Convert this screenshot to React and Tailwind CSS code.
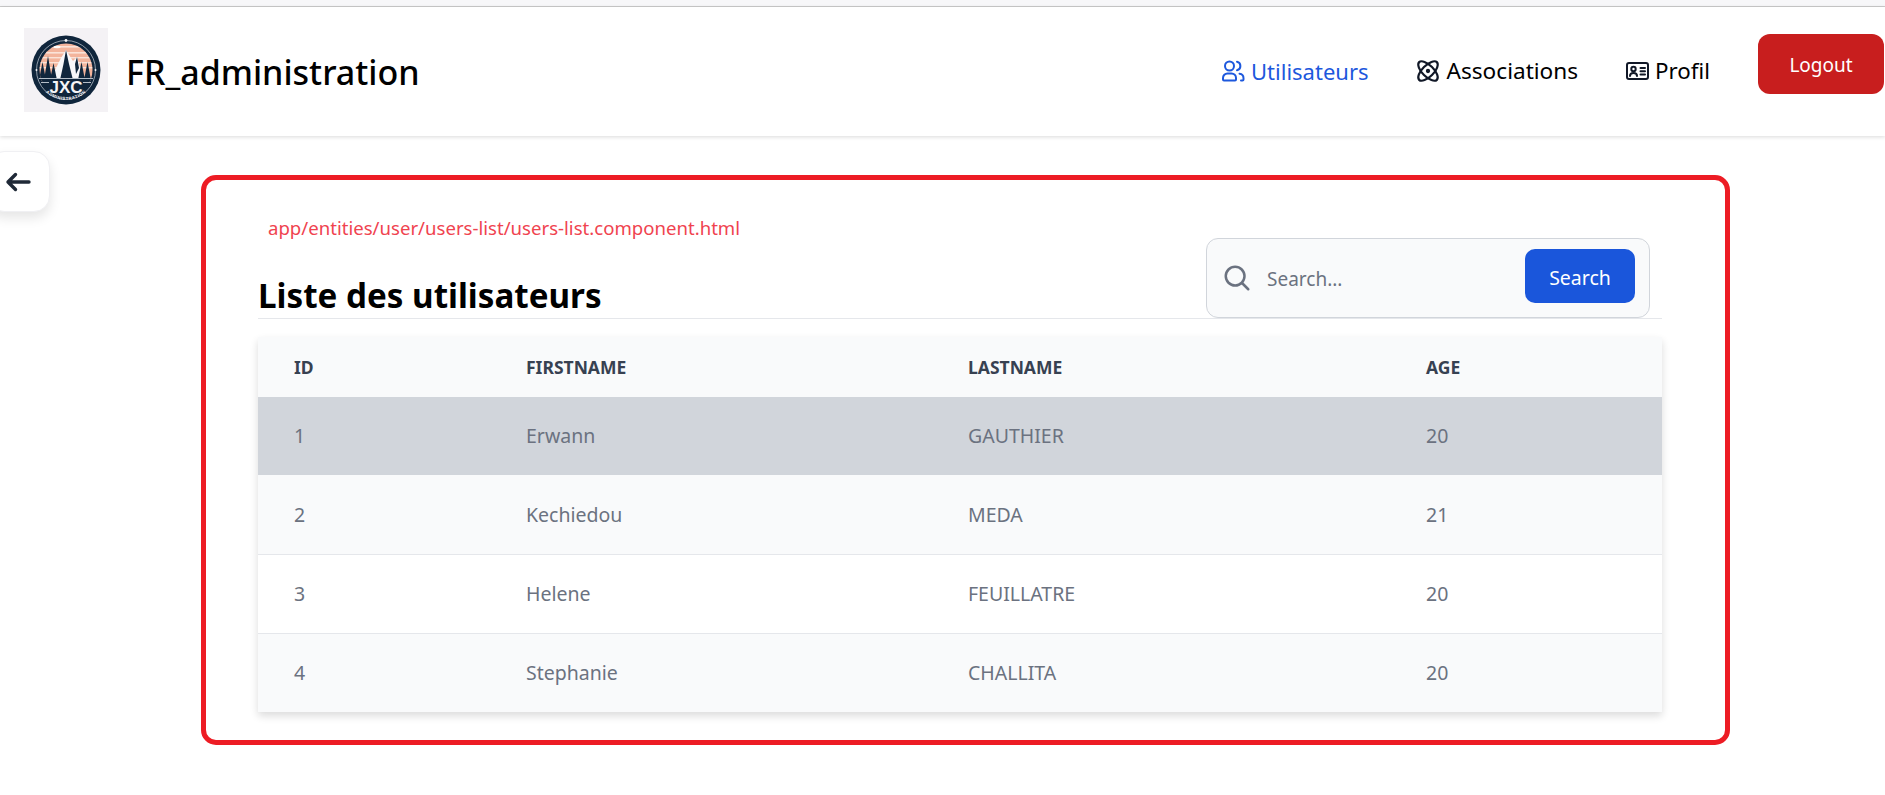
import React from "react";
import { HiOutlineMagnifyingGlass } from "react-icons/hi2";
import { Atom } from "lucide-react";

const FONT = "font-['Noto_Sans','Open_Sans',sans-serif]";

function Logo() {
  return (
    <div className="w-[84px] h-[84px] bg-[#f4f2f5] flex items-center justify-center shrink-0 mt-[-4px]">
      <svg viewBox="0 0 84 84" className="w-[84px] h-[84px]">
        <defs>
          <clipPath id="sky"><circle cx="42" cy="42" r="26.5" /></clipPath>
          <path id="arc" d="M12 42 A30 30 0 0 0 72 42" />
        </defs>
        <circle cx="42" cy="42" r="34.5" fill="#10263c" />
        <circle cx="42" cy="42" r="29.5" fill="none" stroke="#c8d0d8" strokeWidth="0.7" />
        <g clipPath="url(#sky)">
          <rect x="10" y="15" width="64" height="40" fill="#f3b49c" />
          <rect x="10" y="18" width="64" height="1.6" fill="#fbe3d8" />
          <rect x="10" y="24" width="64" height="1.6" fill="#fbe3d8" />
          <rect x="10" y="29" width="64" height="1.4" fill="#fbe3d8" />
          <rect x="10" y="34" width="64" height="1.4" fill="#fbe3d8" />
          <rect x="10" y="39" width="64" height="1.4" fill="#fbe3d8" />
          <ellipse cx="33" cy="19" rx="3.5" ry="1.2" fill="#ffffff" />
          <path d="M26 52 L37 30 L42 22 L47 30 L49 33 L53 29 L60 52 Z" fill="#f7f7f9" />
          <path d="M36 52 L39.5 36 L42 22 L45 36 L49 52 Z" fill="#10263c" />
          <path d="M53 29 L55 40 L52 46 L51 36 Z" fill="#10263c" />
          <path d="M20 52 L24 28 L28 52 Z M15 52 L18.5 34 L22 52 Z M26 52 L29.5 35 L33 52 Z M54 52 L57.5 34 L61 52 Z M60 52 L63.5 34 L67 52 Z" fill="#10263c" />
          <rect x="10" y="50" width="64" height="22" fill="#10263c" />
        </g>
        <rect x="15" y="50" width="54" height="0.9" fill="#c8d0d8" />
        <rect x="17" y="54" width="8" height="0.9" fill="#c8d0d8" />
        <rect x="59" y="54" width="8" height="0.9" fill="#c8d0d8" />
        <text x="42" y="65" textAnchor="middle" fontFamily="'Liberation Sans',sans-serif" fontWeight="700" fontSize="17" fill="#f5f5f7">JXC</text>
        <text fontFamily="'Liberation Sans',sans-serif" fontWeight="700" fontSize="4.3" fill="#f5f5f7" letterSpacing="0.5">
          <textPath href="#arc" startOffset="50%" textAnchor="middle">ADMINISTRATION</textPath>
        </text>
        <circle cx="42" cy="12.5" r="1.4" fill="#f5f5f7" />
        <circle cx="12.5" cy="42" r="1" fill="#f5f5f7" />
        <circle cx="71.5" cy="42" r="1" fill="#f5f5f7" />
      </svg>
    </div>
  );
}

function UsersIcon() {
  return (
    <svg viewBox="0 0 24 22" className="w-[24px] h-[22px]" fill="none" stroke="currentColor" strokeWidth="2" strokeLinecap="round" strokeLinejoin="round">
      <circle cx="8.5" cy="6" r="4.5" />
      <path d="M2 19.5 V18 a4.5 4.5 0 0 1 4.5-4.5 h4 a4.5 4.5 0 0 1 4.5 4.5 v1.5 a1 1 0 0 1 -1 1 H3 a1 1 0 0 1 -1-1 Z" />
      <path d="M16 1.8 a4.3 4.3 0 0 1 0 8.4" />
      <path d="M18.5 13.7 a4.5 4.5 0 0 1 4 4.5 v1.3 a1 1 0 0 1 -1 1 h-1.5" />
    </svg>
  );
}

function IdIcon() {
  return (
    <svg viewBox="0 0 23 18" className="w-[23px] h-[18px] text-[#111827]" fill="none" stroke="currentColor" strokeWidth="2" strokeLinecap="round" strokeLinejoin="round">
      <rect x="1" y="1" width="21" height="16" rx="2" />
      <circle cx="7.5" cy="7" r="2.2" />
      <path d="M4 14 c0-2.2 1.6-3 3.5-3 s3.5 .8 3.5 3" />
      <path d="M14.5 6 h4.5 M14.5 9.2 h4.5 M14.5 12.4 h4.5" />
    </svg>
  );
}

function NavItem({ icon, label, className = "text-[22px]" }) {
  return (
    <a className={`flex items-center gap-[6px] leading-[28px] ${className}`}>
      {icon}
      <span>{label}</span>
    </a>
  );
}

const rows = [
  { id: 1, f: "Erwann", l: "GAUTHIER", a: 20, bg: "bg-[#d1d5db] h-[78px]" },
  { id: 2, f: "Kechiedou", l: "MEDA", a: 21, bg: "bg-[#f9fafb] border-b border-[#e5e7eb] h-[79px]" },
  { id: 3, f: "Helene", l: "FEUILLATRE", a: 20, bg: "bg-white border-b border-[#e5e7eb] h-[79px]" },
  { id: 4, f: "Stephanie", l: "CHALLITA", a: 20, bg: "bg-[#f9fafb] h-[79px]" },
];

export default function App() {
  return (
    <div className={`${FONT} relative bg-white h-[795px] overflow-hidden`}>
      <div className="h-[7px] bg-[#f7f7f9] border-b border-[#cbcbcb]" />
      <header className="h-[129px] bg-white shadow-[0_1px_4px_rgba(0,0,0,0.15)] flex items-center pl-[24px] pr-[1px]">
        <Logo />
        <h1 className="ml-[18px] text-[34px] leading-[44px] font-medium text-black mt-[1px]">FR_administration</h1>
        <nav className="ml-auto flex items-center mt-[-1px]">
          <NavItem className="text-[#1d58dd] text-[22px]" label="Utilisateurs" icon={<UsersIcon />} />
          <NavItem
            className="text-black text-[22.6px] ml-[46px]"
            label="Associations"
            icon={<Atom className="w-[26px] h-[26px] text-[#111827]" strokeWidth={2} />}
          />
          <NavItem className="text-black text-[22.3px] ml-[48px]" label="Profil" icon={<IdIcon />} />
          <button className="ml-[48px] w-[126px] h-[60px] mt-[-14px] pt-[2px] rounded-[12px] bg-[#c81e1e] text-white text-[19px]">
            Logout
          </button>
        </nav>
      </header>

      <button className="absolute left-[-12px] top-[151px] w-[62px] h-[61px] bg-white rounded-[16px] border border-[#f0f0f3] shadow-[0_6px_12px_rgba(0,0,0,0.1)] flex items-center justify-end pr-[18px] text-[#1f2937]">
        <svg viewBox="0 0 26 20" className="w-[26px] h-[20px]" fill="none" stroke="currentColor" strokeWidth="3.4" strokeLinecap="round" strokeLinejoin="round">
          <path d="M3 10 H24 M10.5 2.5 L3 10 L10.5 17.5" />
        </svg>
      </button>

      <main className="ml-[201px] mt-[39px] w-[1529px] h-[570px] border-[5px] border-[#ed1c24] rounded-[15px] pl-[52px]">
        <div className="w-[1404px]">
          <p className="ml-[10px] pt-[36px] text-[18.6px] leading-[24px] text-[#f0434f]">
            app/entities/user/users-list/users-list.component.html
          </p>
          <div className="flex items-end justify-between border-b border-[#e5e7eb] mt-[-3px] h-[82px]">
            <h2 className="text-[33.2px] leading-[44px] font-bold text-black">Liste des utilisateurs</h2>
            <div className="w-[444px] h-[80px] mr-[12px] bg-[#f9fafb] border border-[#d1d5db] rounded-[12px] flex items-center pl-[15px] pr-[14px]">
              <HiOutlineMagnifyingGlass className="w-[30px] h-[30px] text-[#6b7280]" style={{ strokeWidth: 2 }} />
              <span className="ml-[15px] text-[19px] text-[#6b7280] mt-[2px]">Search...</span>
              <button className="ml-auto w-[110px] h-[54px] mt-[-4px] pt-[3px] rounded-[10px] bg-[#1a56db] text-white text-[19.5px]">Search</button>
            </div>
          </div>
          <table className="mt-[18px] w-[1404px] table-fixed border-collapse shadow-[0_4px_8px_rgba(0,0,0,0.14)]">
            <colgroup>
              <col className="w-[232px]" />
              <col className="w-[442px]" />
              <col className="w-[458px]" />
              <col className="w-[272px]" />
            </colgroup>
            <thead>
              <tr className="h-[60px] bg-[#f9fafb] text-left text-[17.5px] font-bold text-[#374151]">
                <th className="pl-[36px]">ID</th>
                <th className="pl-[36px]">FIRSTNAME</th>
                <th className="pl-[36px]">LASTNAME</th>
                <th className="pl-[36px]">AGE</th>
              </tr>
            </thead>
            <tbody>
              {rows.map((r) => (
                <tr key={r.id} className={`text-[19.5px] text-[#6b7280] ${r.bg}`}>
                  <td className="pl-[36px]">{r.id}</td>
                  <td className="pl-[36px]">{r.f}</td>
                  <td className="pl-[36px]">{r.l}</td>
                  <td className="pl-[36px]">{r.a}</td>
                </tr>
              ))}
            </tbody>
          </table>
        </div>
      </main>
    </div>
  );
}
